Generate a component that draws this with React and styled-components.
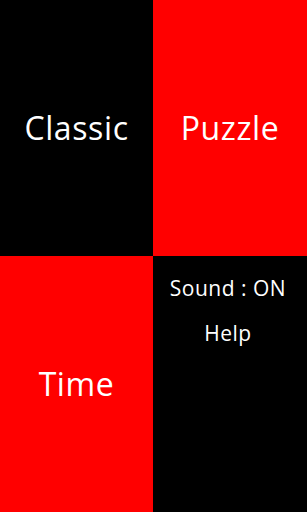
import React from 'react';
import styled, { createGlobalStyle } from 'styled-components';

const GlobalStyle = createGlobalStyle`
  html, body {
    margin: 0;
    padding: 0;
    background: #000;
  }
  body {
    font-family: "Open Sans", "DejaVu Sans", sans-serif;
  }
`;

const Board = styled.div`
  width: 307px;
  height: 512px;
  display: grid;
  grid-template-columns: 153px 154px;
  grid-template-rows: 256px 256px;
`;

const Tile = styled.div`
  background: ${({ red }) => (red ? '#ff0000' : '#000')};
  color: #fff;
  display: flex;
  align-items: center;
  justify-content: center;
`;

const ModeLabel = styled.span`
  font-size: 32px;
  font-weight: 500;
  line-height: 1;
  letter-spacing: 0.6px;
`;

const Menu = styled.div`
  background: #000;
  color: #fff;
  display: flex;
  flex-direction: column;
  align-items: center;
  padding-top: 21px;
  padding-right: 4px;
  gap: 23px;
`;

const MenuItem = styled.span`
  font-size: 21px;
  font-weight: 500;
  line-height: 22px;
  letter-spacing: 0.5px;
`;

export default function App() {
  return (
    <>
      <GlobalStyle />
      <Board>
        <Tile>
          <ModeLabel>Classic</ModeLabel>
        </Tile>
        <Tile red>
          <ModeLabel>Puzzle</ModeLabel>
        </Tile>
        <Tile red>
          <ModeLabel>Time</ModeLabel>
        </Tile>
        <Menu>
          <MenuItem>Sound : ON</MenuItem>
          <MenuItem>Help</MenuItem>
        </Menu>
      </Board>
    </>
  );
}
